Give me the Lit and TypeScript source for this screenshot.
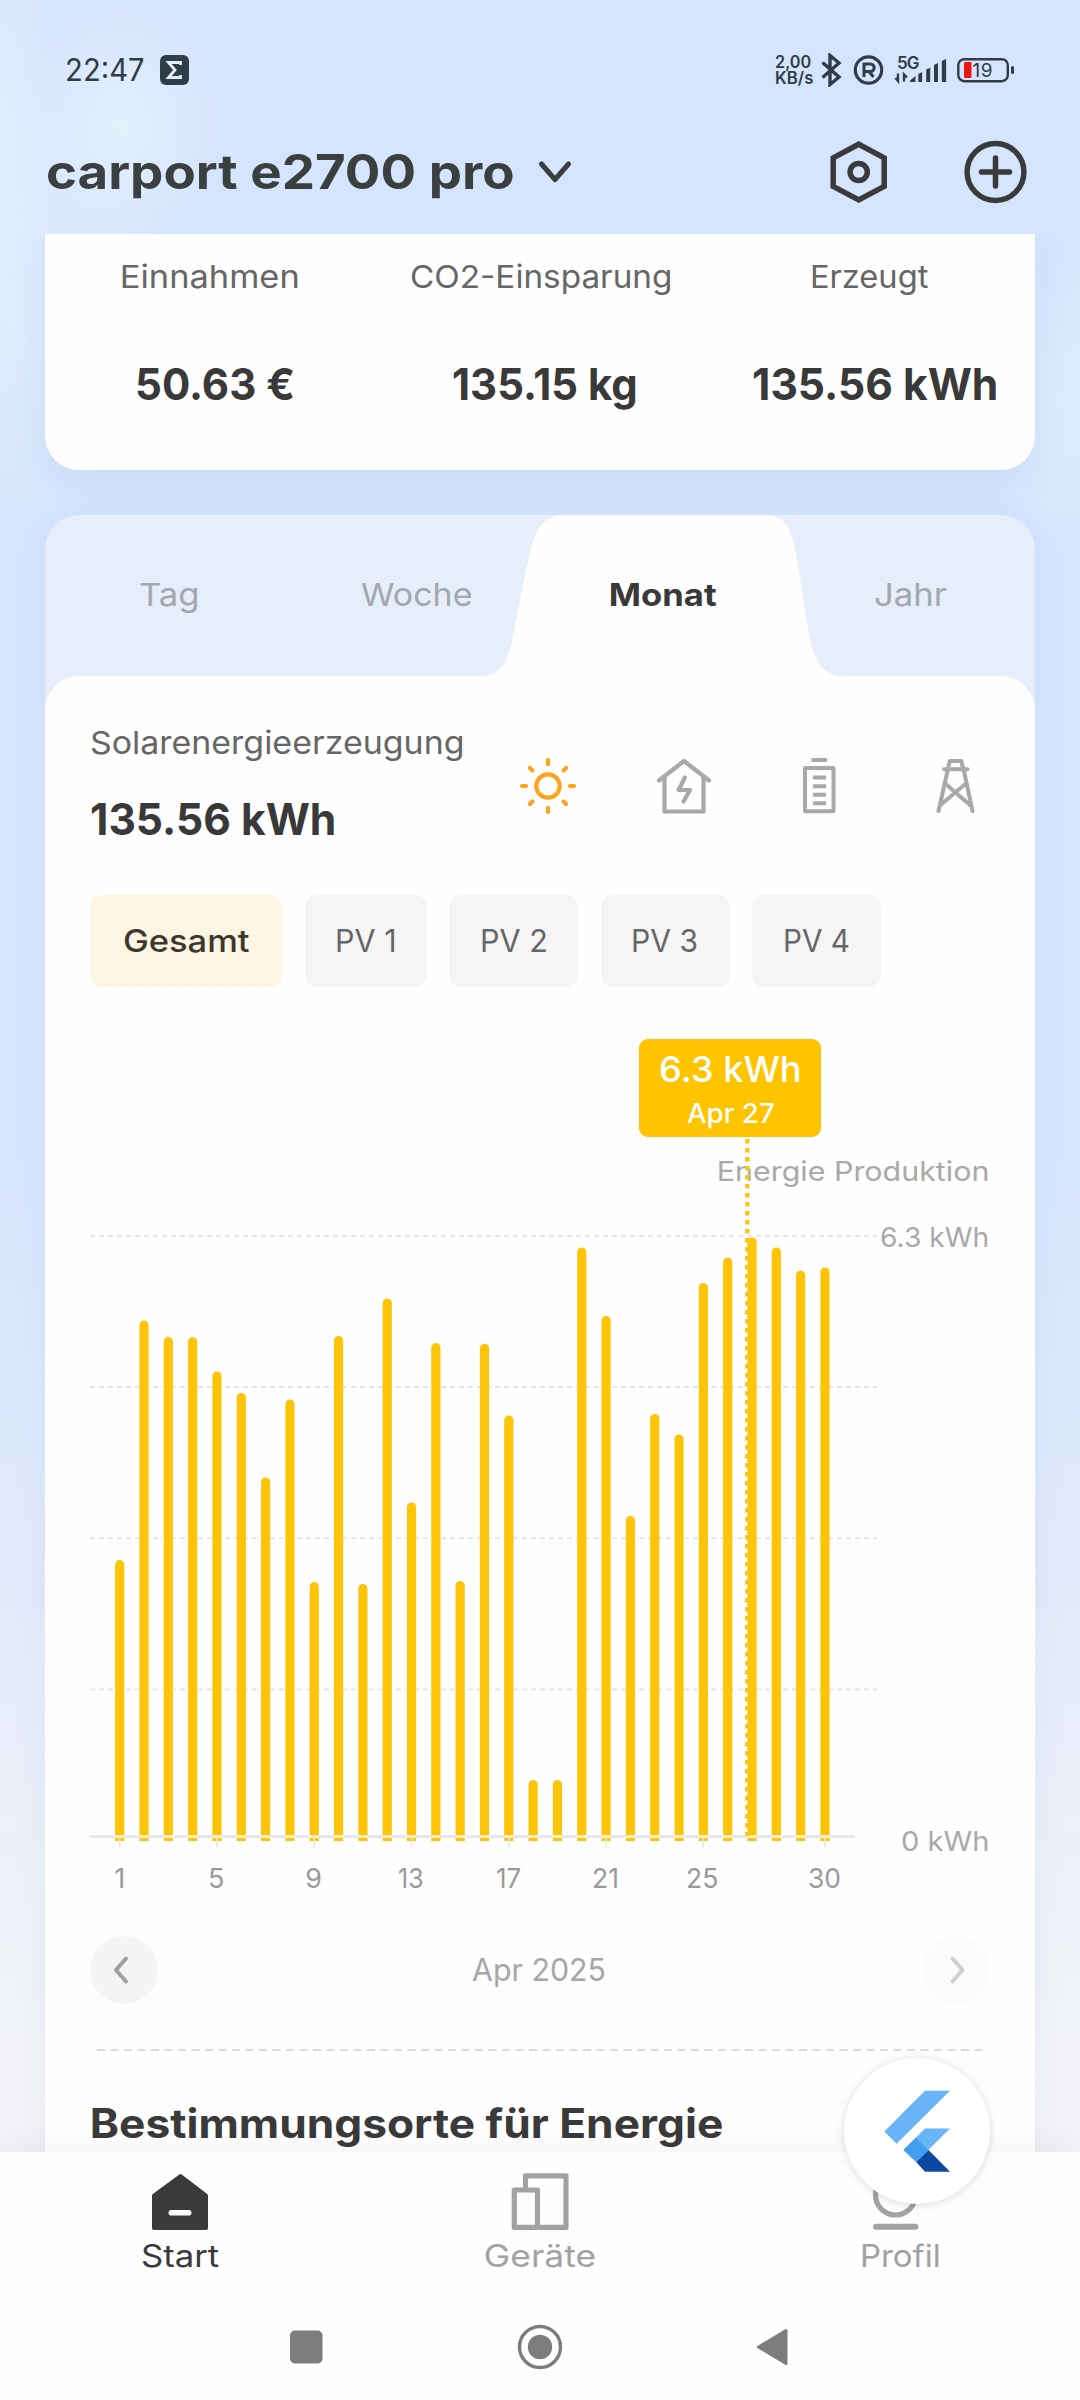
import { LitElement, html, svg, css } from "lit";
import { customElement, property, query } from "lit/decorators.js";

const FONT = css`Inter, "Liberation Sans", sans-serif`;

/** A single line of text whose drawn letters span exactly `w` pixels. */
@customElement("ink-text")
export class InkText extends LitElement {
  @property() text = "";
  @property({ type: Number }) w = 0;
  @query("span") private line!: HTMLSpanElement;

  static styles = css`
    :host { display: block; flex: none; white-space: pre; }
    span { display: block; width: max-content; transform-origin: 0 50%; }
  `;

  protected updated() {
    const cs = getComputedStyle(this);
    const ctx = document.createElement("canvas").getContext("2d")!;
    ctx.font = `${cs.fontWeight} ${cs.fontSize} ${cs.fontFamily}`;
    const m = ctx.measureText(this.text);
    const ink = m.actualBoundingBoxLeft + m.actualBoundingBoxRight;
    const n = this.text.length - 1;
    const width = n > 0 && this.w ? this.w : ink;
    const scale = width / ink;
    this.style.width = `${width}px`;
    this.line.style.transform = `translateX(${m.actualBoundingBoxLeft * scale}px) scaleX(${scale})`;
  }

  render() {
    return html`<span>${this.text}</span>`;
  }
}

const t = (cls: string, text: string, w = 0) =>
  html`<ink-text class=${cls} .text=${text} .w=${w}></ink-text>`;

/* Top edge of each day's bar, in chart coordinates. */
const BAR_TOPS = [
  1560, 1320.5, 1337, 1337, 1371.5, 1393, 1477.5, 1399.5, 1582, 1336,
  1584, 1298.5, 1502.5, 1343, 1581, 1343.7, 1415.5, 1780, 1780, 1247.5,
  1316, 1516, 1414, 1434.5, 1283, 1257.5, 1237.5, 1247.5, 1270.5, 1267.5,
];
const FIRST_X = 119.7;
const STEP = 24.32;
const BASE_Y = 1841;
const DAY_LABELS: Record<number, number> = { 1: 0, 5: 14, 9: 15, 13: 24, 17: 23, 21: 23, 25: 29, 30: 31 };

@customElement("energy-chart")
export class EnergyChart extends LitElement {
  static styles = css`
    :host { display: grid; height: 949px; width: 900px; position: relative; font-family: ${FONT}; }
    .plot, .ylabels, .xlabels { grid-area: 1 / 1; }
    .plot { display: block; width: 900px; height: 949px; z-index: 1; }
    .ylabels { display: flex; flex-direction: column; align-items: flex-end; padding: 164px 2.5px 0 0; color: #a9a9a9; font-size: 27.5px; line-height: 40px; }
    .y2 { margin-top: 26px; }
    .y3 { margin-top: 563.5px; }
    .xlabels { align-self: end; display: grid; grid-template-columns: repeat(30, 24.32px); padding-left: 17px; margin-bottom: 37px; color: #999; font-size: 27px; line-height: 40px; height: 40px; }
    .day { display: flex; justify-content: center; width: 24.32px; }
    .tip { position: absolute; left: 548.5px; top: 51.5px; width: 182.5px; height: 98.5px; border-radius: 9px; background: #fec400; color: #fff; display: flex; flex-direction: column; align-items: center; z-index: 2; }
    .tipval { font-size: 36px; font-weight: 500; line-height: 40px; margin-top: 10.5px; }
    .tipday { font-size: 26.5px; font-weight: 500; line-height: 36px; margin-top: 5.5px; }
  `;

  private bar(top: number, i: number) {
    const x = FIRST_X + i * STEP - 4.6;
    return svg`<path fill="#fec40a" d=${`M${x} ${BASE_Y}V${top + 4.6}a4.6 4.6 0 0 1 9.2 0V${BASE_Y}z`} />`;
  }

  render() {
    return html`
      <div class="ylabels">
        ${t("y1", "Energie Produktion", 269)}
        ${t("y2", "6.3 kWh", 107)}
        ${t("y3", "0 kWh", 86)}
      </div>
      <div class="xlabels">
        ${BAR_TOPS.map((_, i) => html`<div class="day">${
          i + 1 in DAY_LABELS ? t("n", String(i + 1), DAY_LABELS[i + 1]) : ""}</div>`)}
      </div>
      <svg class="plot" viewBox="90 987 900 949">
        ${[1235.7, 1387, 1538.3, 1689.6].map((y) => svg`<path d=${`M90 ${y}H877`} stroke="#e4e5e8" stroke-width="2" stroke-dasharray="5 4" />`)}
        ${BAR_TOPS.map((top, i) => this.bar(top, i))}
        <path d="M90 1836.6H855" stroke="#e6e6e6" stroke-width="2.6" />
        ${BAR_TOPS.map((_, i) => svg`<path d=${`M${FIRST_X + i * STEP - 4.6} 1836.6h9.2`} stroke="#fdf3c8" stroke-width="2.6" />`)}
        ${Object.keys(DAY_LABELS).map((d) => svg`<path d=${`M${FIRST_X + (Number(d) - 1) * STEP} 1837V1847.5`} stroke="#e9e7e0" stroke-width="1.6" />`)}
        <path d="M747.3 1139V1836" stroke="#f9c713" stroke-width="4.4" stroke-dasharray="4.5 4.5" />
      </svg>
      <div class="tip">
        ${t("tipval", "6.3 kWh", 140)}
        ${t("tipday", "Apr 27", 86.5)}
      </div>
    `;
  }
}

const sunRays = [0, 45, 90, 135, 180, 225, 270, 315];

@customElement("app-root")
export class AppRoot extends LitElement {
  static styles = css`
    :host { display: block; }
    * { box-sizing: border-box; }
    svg { display: block; flex: none; }
    .phone {
      position: relative; width: 1080px; height: 2400px; overflow: hidden; display: flex; flex-direction: column;
      font-family: ${FONT}; color: #3a3a3a;
      background:
        radial-gradient(ellipse 100px 120px at 120px 125px, rgba(232, 242, 253, .8), rgba(232, 242, 253, 0)),
        radial-gradient(ellipse 60px 240px at 0 150px, rgba(226, 240, 253, .9), rgba(226, 240, 253, 0)),
        radial-gradient(ellipse 160px 220px at 20px 320px, rgba(224, 238, 253, .8), rgba(224, 238, 253, 0)),
        radial-gradient(ellipse 120px 150px at 1080px 400px, rgba(219, 238, 254, 1), rgba(219, 238, 254, 0)),
        linear-gradient(#d6e5fe 0, #d5e5fe 1150px, #dde8fc 1400px, #e4eafa 1600px, #ebf0f8 1850px, #f1f3f6 2060px, #f1f2f5 2152px);
    }
    .status { height: 140px; padding: 0 66px 0 67px; display: flex; align-items: center; color: #303c48; flex: none; }
    .clock { font-size: 31px; font-weight: 400; line-height: 40px; }
    .sigma { margin-left: 16px; }
    .spacer { flex: 1; }
    .net { font-size: 17px; font-weight: 600; line-height: 16px; margin-right: 8px; }
    .header { height: 64px; margin-bottom: 30px; padding: 0 52px 0 47px; display: flex; align-items: center; flex: none; }
    .title { font-size: 48px; font-weight: 700; line-height: 64px; color: #3a3f3f; }
    .chev { margin-left: 22px; }
    .plus { margin-left: 75px; }
    .scroll { height: 1918px; flex: none; overflow: hidden; padding: 0 45px; }
    .summary { height: 236px; background: #fefefe; border-radius: 0 0 34px 34px; display: grid; grid-template-columns: repeat(3, 330px); padding-top: 22.5px; box-shadow: 0 10px 36px rgba(100, 130, 190, .12); }
    .stat { display: flex; flex-direction: column; align-items: center; }
    .label { font-size: 31.5px; line-height: 40px; color: #666; }
    .big { font-size: 44px; font-weight: 700; line-height: 60px; color: #393939; }
    .stat .big { margin: 57.5px 0 0 9px; }
    .panel { margin-top: 45px; border-radius: 34px 34px 0 0; background: linear-gradient(#e6edfb 0 190px, #fefefe 190px); box-shadow: 0 0 32px rgba(100, 130, 180, .07); }
    .tabs { display: grid; height: 161px; }
    .tabshape, .tabrow { grid-area: 1 / 1; }
    .tabrow { display: grid; grid-template-columns: repeat(4, 1fr); justify-items: center; padding-top: 59.5px; }
    .tab { font-size: 31.5px; line-height: 40px; color: #a3a7ae; }
    .active { font-weight: 700; color: #393939; }
    .body { background: #fefefe; border-radius: 34px 34px 0 0; padding: 46.5px 45px 0; height: 1500px; }
    .summaryrow { display: flex; justify-content: space-between; align-items: center; padding: 0 5.500px 0 .5px; }
    .figures .big { margin-top: 26.5px; }
    .icons { display: flex; gap: 75.5px; }
    .chips { display: flex; gap: 22.5px; margin-top: 46px; }
    .chip { height: 92px; border-radius: 12px; background: #f5f5f5; display: flex; align-items: center; justify-content: center; color: #666; font-size: 31px; line-height: 40px; padding: 0 32.5px 1px; }
    .on { background: #fef6e2; color: #3d382e; font-weight: 500; padding: 0 33.5px 1px; }
    .pager { height: 68px; display: flex; align-items: center; justify-content: space-between; }
    .round { width: 68px; height: 68px; border-radius: 50%; background: #f4f4f4; display: flex; align-items: center; justify-content: center; }
    .faint { background: #fbfbfb; }
    .month { font-size: 30.5px; line-height: 40px; color: #a6a6a6; margin-right: 3px; }
    .rule { display: block; margin: 44.5px 0 48.5px 7px; }
    .heading { font-size: 40.5px; font-weight: 700; line-height: 50px; margin-left: 2px; }
    .bottom { position: relative; height: 248px; flex: none; background: #fefefe; box-shadow: 0 -6px 26px rgba(0, 0, 0, .04); }
    .nav { height: 142px; display: grid; grid-template-columns: repeat(3, 1fr); padding-top: 20px; }
    .item { display: flex; flex-direction: column; align-items: center; gap: 4px; color: #a2a2a2; font-size: 31px; line-height: 40px; }
    .here { color: #3a3a3a; }
    .sys { height: 106px; display: flex; align-items: center; justify-content: center; gap: 173px; }
    .fab { position: absolute; left: 844px; top: 2057.5px; width: 146px; height: 146px; border-radius: 50%; background: #fff; box-shadow: 0 1px 8px rgba(0, 0, 0, .15); }
  `;

  private statusBar() {
    return html`<div class="status">
      ${t("clock", "22:47", 77)}
      <svg class="sigma" width="29" height="30" viewBox="0 0 29 30"><rect width="29" height="30" rx="6" fill="#303c48"/><path d="M20.5 10V7.5H8.5l6.5 7.5-6.5 7.5h12V20" fill="none" stroke="#e4edfb" stroke-width="2.8"/></svg>
      <div class="spacer"></div>
      <div class="net">${t("n", "2,00", 35)}${t("n", "KB/s", 37)}</div>
      <svg width="193" height="34" viewBox="821 52 193 34" fill="none" stroke="#303c48">
        <path d="M822.5 61.5 839 76l-9 7.5V54.5l9 7.5L822.5 76.5" stroke-width="3.4"/>
        <circle cx="868.5" cy="69" r="13.2" stroke-width="3.2"/>
        <path d="M864 76V63h6.5a3.7 3.7 0 0 1 0 7.4H864M869 70.5l4.500 5.5" stroke-width="3"/>
        <path d="M898 72.5v7.5l-2.600-3M904 80.5v-7l3 3" stroke-width="2.4"/>
        <g fill="#303c48" stroke="none">
          <path d="M910 81v-1.500l5.500-4.500V81zM918.300 81v-8l3.800-2V81zM926.200 81V68.500l4-1.800V81zM934 81V64l4-2v19zM941.800 81V60l4.300-2v23z"/>
          <text x="897" y="68.300" font-size="17" font-weight="600" textLength="22.500" font-family="Inter, sans-serif">5G</text>
          <text x="972.500" y="76" font-size="19" textLength="20" font-family="Inter, sans-serif">19</text>
          <rect x="1011" y="65" width="3" height="8" rx="1.500"/>
        </g>
        <rect x="958.300" y="58.200" width="49.500" height="22" rx="6" stroke-width="2.400"/>
        <rect x="964" y="61" width="7.500" height="16" rx="1" fill="#ee1414" stroke="none"/>
      </svg>
    </div>`;
  }

  private header() {
    return html`<div class="header">
      ${t("title", "carport e2700 pro", 466)}
      <svg class="chev" width="40" height="30" viewBox="0 0 40 30"><path d="M6.500 7 20 22.500 33.500 7" fill="none" stroke="#3a3f3f" stroke-width="5" stroke-linecap="round" stroke-linejoin="round"/></svg>
      <div class="spacer"></div>
      <svg width="60" height="64" viewBox="0 0 60 64" fill="none" stroke="#3a3a3a" stroke-width="5.500"><path d="M29.700 4.200 55.200 17.800V46.400L29.700 60 4.200 46.400V17.800z"/><circle cx="29.700" cy="32" r="8.600"/></svg>
      <svg class="plus" width="64" height="64" viewBox="0 0 64 64" fill="none" stroke="#3a3a3a" stroke-width="5.500" stroke-linecap="round"><circle cx="31.500" cy="32" r="28.400"/><path d="M17.500 32h28M31.500 18v28"/></svg>
    </div>`;
  }

  private sourceIcons() {
    return html`<div class="icons">
      <svg width="60" height="60" viewBox="-30 -30 60 60" fill="none" stroke="#fca41c" stroke-width="4.200" stroke-linecap="round"><circle r="11.700"/>${sunRays.map((a) => svg`<path d=${a % 90 ? "M0 -22v-3.600" : "M0 -21.800v-4.200"} transform=${`rotate(${a})`} />`)}</svg>
      <svg width="60" height="60" viewBox="654 755 60 60" fill="none" stroke="#a8a8a8" stroke-width="4.200" stroke-linejoin="round" stroke-linecap="round"><path d="M659 779.500 684 760l25 19.500M664.500 776v34.500h39V776"/><path d="M685 776.500 678.500 789H690l-6.500 11.500"/></svg>
      <svg width="60" height="60" viewBox="789.500 755 60 60" fill="none" stroke="#a8a8a8" stroke-width="4"><path d="M813.500 759h12.500" stroke-linecap="round"/><rect x="805.500" y="767" width="28.500" height="43.300" stroke-linejoin="round"/><path d="M813.500 776.500h13M813.500 785.200h13M813.500 793.700h13M813.500 802.200h13"/></svg>
      <svg width="60" height="60" viewBox="925 755 60 60" fill="none" stroke="#a8a8a8" stroke-width="4" stroke-linecap="round" stroke-linejoin="round"><path d="M944 768.200h23.500M948 768l1.800-8h11.500l1.900 8M948 768 938.500 810M963.500 768l9 42M944.500 782l25.500 22M966.500 782 940.500 804"/></svg>
    </div>`;
  }

  render() {
    return html`<div class="phone">
      ${this.statusBar()}
      ${this.header()}
      <div class="scroll">
        <div class="summary">
          <div class="stat">${t("label", "Einnahmen", 176)}${t("big", "50.63 €", 156)}</div>
          <div class="stat">${t("label", "CO2-Einsparung", 259)}${t("big", "135.15 kg", 183)}</div>
          <div class="stat">${t("label", "Erzeugt", 116)}${t("big", "135.56 kWh", 243)}</div>
        </div>
        <div class="panel">
          <div class="tabs">
            <svg class="tabshape" width="990" height="162" viewBox="45 515 990 162"><path fill="#fefefe" d="M480 677C502 675 508 660 512 640C521 600 524 575 530 552C536 528 544 515 564 515H766C784 515 791 528 795 548C800 575 804 605 810 640C814 658 822 675 844 677z"/></svg>
            <div class="tabrow">
              ${t("tab", "Tag", 57)}${t("tab", "Woche", 110)}${t("tab active", "Monat", 105)}${t("tab", "Jahr", 72)}
            </div>
          </div>
          <div class="body">
            <div class="summaryrow">
              <div class="figures">
                ${t("label", "Solarenergieerzeugung", 371)}
                ${t("big", "135.56 kWh", 243)}
              </div>
              ${this.sourceIcons()}
            </div>
            <div class="chips">
              <div class="chip on">${t("n", "Gesamt", 125)}</div>
              <div class="chip">${t("n", "PV 1", 57)}</div>
              <div class="chip">${t("n", "PV 2", 64)}</div>
              <div class="chip">${t("n", "PV 3", 64)}</div>
              <div class="chip">${t("n", "PV 4", 64)}</div>
            </div>
            <energy-chart></energy-chart>
            <div class="pager">
              <div class="round"><svg width="30" height="34" viewBox="0 0 30 34"><path d="M17 5.500 7 17l10 11.500" fill="none" stroke="#a0a0a0" stroke-width="4" stroke-linecap="round" stroke-linejoin="round"/></svg></div>
              ${t("month", "Apr 2025", 132.5)}
              <div class="round faint"><svg width="30" height="34" viewBox="0 0 30 34"><path d="M11.500 5.500 21.500 17l-10 11.500" fill="none" stroke="#cfcfcf" stroke-width="4" stroke-linecap="round" stroke-linejoin="round"/></svg></div>
            </div>
            <svg class="rule" width="886" height="2" viewBox="0 0 886 2"><path d="M0 1H886" stroke="#dcdcdc" stroke-width="2" stroke-dasharray="8 5.500"/></svg>
            ${t("heading", "Bestimmungsorte für Energie", 630)}
          </div>
        </div>
      </div>
      <div class="bottom">
        <div class="nav">
          <div class="item here">
            <svg width="60" height="60" viewBox="150 2172 60 60"><path d="M180.500 2176 206 2195.500V2228H154V2195.500z" fill="#3a3a38" stroke="#3a3a38" stroke-width="4" stroke-linejoin="round"/><rect x="168.500" y="2210" width="23" height="5.600" rx="2.800" fill="#fefefe"/></svg>
            ${t("n", "Start", 77)}
          </div>
          <div class="item">
            <svg width="60" height="60" viewBox="510 2172 60 60" fill="none" stroke="#a2a2a2" stroke-width="5.200" stroke-linejoin="round"><path d="M525.500 2190V2175.800H566V2227.400H514.300V2190H537.500V2227"/></svg>
            ${t("n", "Geräte", 110)}
          </div>
          <div class="item">
            <svg width="60" height="60" viewBox="870 2172 60 60" fill="none" stroke="#a2a2a2"><circle cx="895.500" cy="2195" r="20" stroke-width="5.200"/><path d="M876 2226.800h39.500" stroke-width="6" stroke-linecap="round"/></svg>
            ${t("n", "Profil", 77)}
          </div>
        </div>
        <div class="sys">
          <svg width="60" height="60" viewBox="0 0 60 60"><rect x="13" y="13.500" width="32.500" height="33" rx="5" fill="#7d7d7d"/></svg>
          <svg width="60" height="60" viewBox="0 0 60 60"><circle cx="30" cy="30" r="20.500" fill="none" stroke="#7d7d7d" stroke-width="3.400"/><circle cx="30" cy="30" r="12.200" fill="#7d7d7d"/></svg>
          <svg width="60" height="60" viewBox="0 0 60 60"><path d="M43 13.500V46.500L15.500 30z" fill="#7d7d7d" stroke="#7d7d7d" stroke-width="3" stroke-linejoin="round"/></svg>
        </div>
      </div>
      <div class="fab">
        <svg width="146" height="146" viewBox="844 2057.500 146 146">
          <path d="M925 2090.300H950L896.500 2143.200 884.300 2131z" fill="#69b4f8"/>
          <path d="M925 2128H950L916.200 2161.500 903.500 2149.500z" fill="#69b4f8"/>
          <path d="M916.200 2161.500 928.500 2149.500 950 2171.300H925z" fill="#0d47a1"/>
          <path d="M903.500 2149.500 915.800 2137.200 928.500 2149.500 916.200 2161.500z" fill="#429ff0"/>
        </svg>
      </div>
    </div>`;
  }
}
